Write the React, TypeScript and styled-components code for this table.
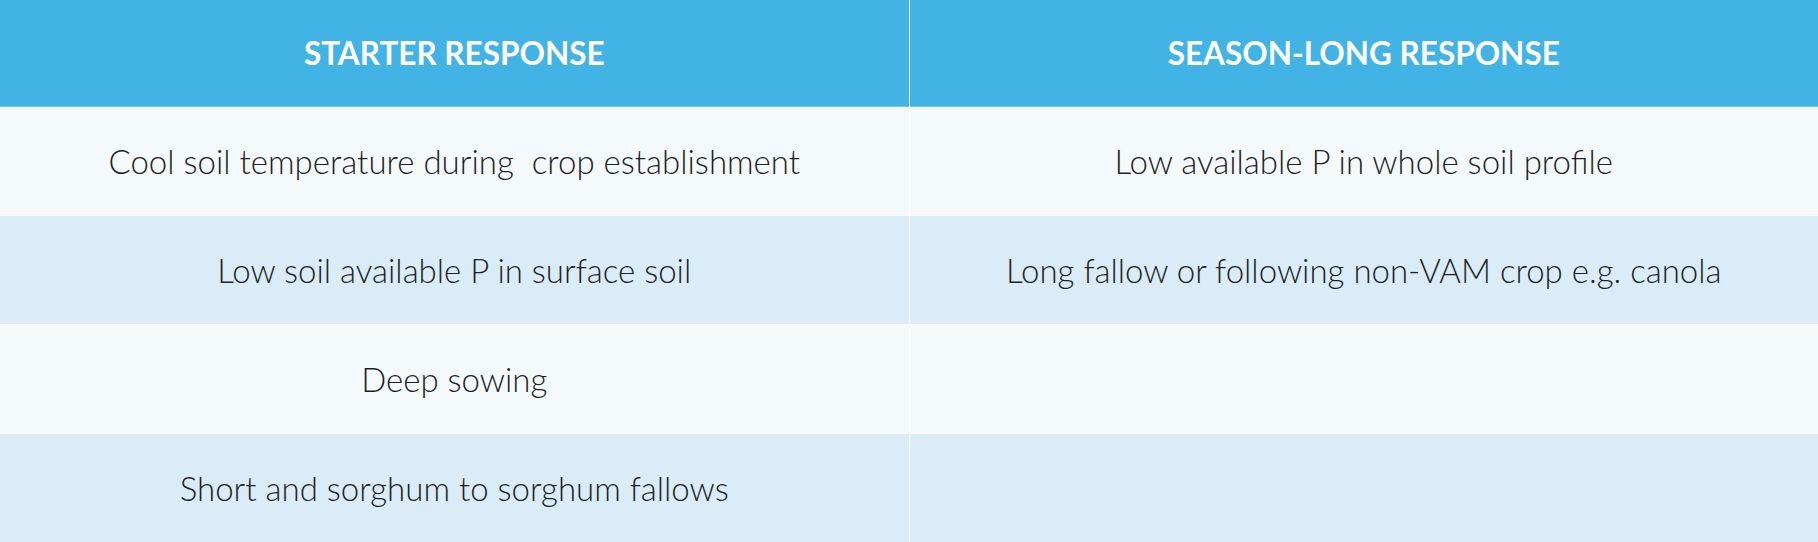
import React from "react";
import styled, { createGlobalStyle } from "styled-components";

const Global = createGlobalStyle`
  html, body { margin: 0; padding: 0; background: #ffffff; }
  body { font-family: Lato, "Open Sans", sans-serif; }
`;

const Table = styled.div`
  width: 1818px;
  display: grid;
  grid-template-columns: 1fr 1fr;
  column-gap: 1px;
  row-gap: 1px;
  background: #ffffff;
`;

const HeadCell = styled.div`
  height: 106px;
  background: #42b3e5;
  border-bottom: 1px solid #72c5ec;
  margin-bottom: -1px;
  display: flex;
  align-items: center;
  justify-content: center;
  color: #ffffff;
  font-family: Lato, sans-serif;
  font-weight: 700;
  font-size: 31.5px;
  text-transform: uppercase;
`;

const Cell = styled.div<{ $alt: boolean }>`
  height: 108px;
  background: ${(p) => (p.$alt ? "#daecf8" : "#f4f9fc")};
  display: flex;
  align-items: center;
  justify-content: center;
  color: #1f1f1f;
  font-family: Lato, sans-serif;
  font-weight: 300;
  font-size: 33px;
  white-space: pre;
`;

const rows: [string, string][] = [
  ["Cool soil temperature during  crop establishment", "Low available P in whole soil profile"],
  ["Low soil available P in surface soil", "Long fallow or following non-VAM crop e.g. canola"],
  ["Deep sowing", ""],
  ["Short and sorghum to sorghum fallows", ""],
];

export default function App() {
  return (
    <>
      <Global />
      <Table>
        <HeadCell>Starter Response</HeadCell>
        <HeadCell>Season-Long Response</HeadCell>
        {rows.map((r, i) => (
          <React.Fragment key={i}>
            <Cell $alt={i % 2 === 1}>{r[0]}</Cell>
            <Cell $alt={i % 2 === 1}>{r[1]}</Cell>
          </React.Fragment>
        ))}
      </Table>
    </>
  );
}
